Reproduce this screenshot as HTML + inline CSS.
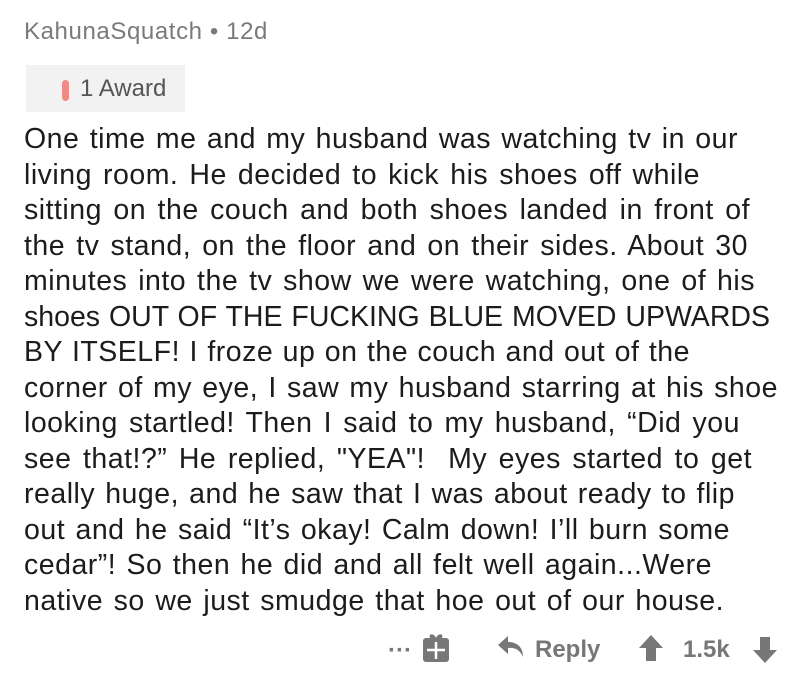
<!DOCTYPE html>
<html><head><meta charset="utf-8"><style>
body{margin:0;width:800px;height:690px;background:#fff;font-family:"Liberation Sans",sans-serif;position:relative;overflow:hidden}
.hd{position:absolute;left:24px;top:18px;font-size:24px;letter-spacing:0.6px;color:#7a7a7a}
.aw{position:absolute;left:26px;top:65px;width:159px;height:47px;background:#f2f2f2}
.pill{position:absolute;left:62px;top:80px;width:7px;height:21px;border-radius:4px;background:#ee8b85}
.awt{position:absolute;left:80px;top:75px;font-size:24px;color:#555}
.txt{position:absolute;left:24px;top:122px;font-size:28.5px;line-height:35.5px;color:#1c1c1c;letter-spacing:0.5px}
.txt div{text-align:justify;text-align-last:justify;white-space:nowrap;height:35.5px}
.bt{position:absolute;top:636px;font-size:24px;color:#777;font-weight:bold}
</style></head><body>
<div class="hd">KahunaSquatch • 12d</div>
<div class="aw"></div><div class="pill"></div><div class="awt">1 Award</div>
<div class="txt">
<div style="width:714px">One time me and my husband was watching tv in our</div>
<div style="width:676px">living room. He decided to kick his shoes off while</div>
<div style="width:726px">sitting on the couch and both shoes landed in front of</div>
<div style="width:724px">the tv stand, on the floor and on their sides. About 30</div>
<div style="width:731px">minutes into the tv show we were watching, one of his</div>
<div style="width:746px;letter-spacing:0">shoes OUT OF THE FUCKING BLUE MOVED UPWARDS</div>
<div style="width:666px">BY ITSELF! I froze up on the couch and out of the</div>
<div style="width:754px">corner of my eye, I saw my husband starring at his shoe</div>
<div style="width:716px">looking startled! Then I said to my husband, “Did you</div>
<div style="width:728px">see that!?” He replied, "YEA"!&nbsp; My eyes started to get</div>
<div style="width:711px">really huge, and he saw that I was about ready to flip</div>
<div style="width:706px">out and he said “It’s okay! Calm down! I’ll burn some</div>
<div style="width:688px">cedar”! So then he did and all felt well again...Were</div>
<div style="width:700px">native so we just smudge that hoe out of our house.</div>
</div>
<div class="bt" style="left:388px;top:637px">···</div>
<svg style="position:absolute;left:422px;top:632px" width="28" height="30" viewBox="0 0 28 30">
<path d="M8 6 C6 1 12 1 14 6 C16 1 22 1 20 6Z" fill="#777"/>
<rect x="1" y="6" width="26" height="24" rx="3" fill="#777"/>
<path d="M14 10V27M5 18H23" stroke="#fff" stroke-width="2.5"/></svg>
<svg style="position:absolute;left:497px;top:635px" width="28" height="26" viewBox="0 0 28 26">
<path d="M11 1 L1 10 L11 19 V13 C18 12 23 15 26 22 C26 12 20 7 11 7Z" fill="#777"/></svg>
<div class="bt" style="left:535px">Reply</div>
<svg style="position:absolute;left:638px;top:634px" width="26" height="28" viewBox="0 0 26 28">
<path d="M13 1 L25 14 H18 V27 H8 V14 H1Z" fill="#777"/></svg>
<div class="bt" style="left:683px">1.5k</div>
<svg style="position:absolute;left:752px;top:636px" width="26" height="28" viewBox="0 0 26 28">
<path d="M13 27 L25 14 H18 V1 H8 V14 H1Z" fill="#777"/></svg>
</body></html>
